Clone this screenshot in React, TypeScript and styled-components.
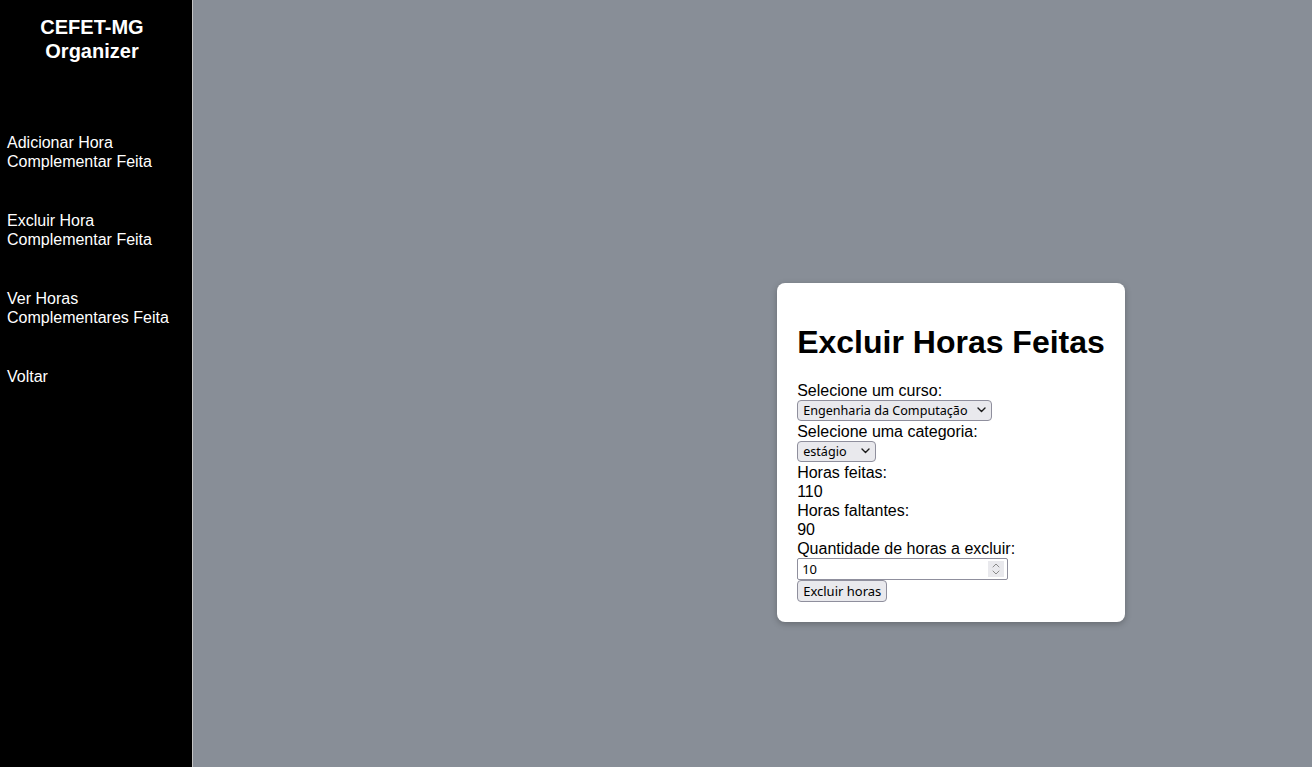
import React, { useState } from 'react';
import styled, { createGlobalStyle } from 'styled-components';

const GlobalStyle = createGlobalStyle`
  html, body {
    margin: 0;
    padding: 0;
    height: 100%;
  }
  body {
    font-family: "Liberation Sans", Arial, sans-serif;
  }
`;

const Layout = styled.div`
  display: flex;
  height: 767px;
  overflow: hidden;
`;

const Sidebar = styled.nav`
  width: 192px;
  flex-shrink: 0;
  background-color: #000;
  color: #fff;
  border-right: 1px solid #c4c4c4;
  display: flex;
  flex-direction: column;
`;

const Brand = styled.h2`
  margin: 15px 8px 0 0;
  font-size: 20px;
  line-height: 24px;
  font-weight: bold;
  text-align: center;
`;

const NavList = styled.ul`
  list-style: none;
  margin: 70px 0 0;
  padding: 0 0 0 7px;
  display: flex;
  flex-direction: column;
  gap: 40px;
`;

const NavLink = styled.a`
  display: block;
  color: #fff;
  text-decoration: none;
  font-size: 16px;
  line-height: 19px;
  cursor: pointer;
`;

const Main = styled.main`
  flex: 1;
  background-color: #888e97;
  display: flex;
  justify-content: center;
  align-items: center;
  padding: 138px 0 0 397px;
`;

const Card = styled.section`
  background: #fff;
  border-radius: 8px;
  padding: 20px;
  box-shadow: 0 2px 6px rgba(0, 0, 0, 0.25);
  display: flex;
  flex-direction: column;
  align-items: flex-start;
`;

const Title = styled.h1`
  margin: 21px 0 20px;
  font-size: 32px;
  line-height: 37px;
  font-weight: bold;
  color: #000;
`;

const Label = styled.label`
  font-size: 16px;
  line-height: 19px;
  color: #000;
`;

const Value = styled.span`
  font-size: 16px;
  line-height: 19px;
  color: #000;
`;

const Field = styled.div`
  display: flex;
  flex-direction: column;
  align-items: flex-start;
`;

const controlFont = `
  font-family: "Noto Sans", "DejaVu Sans", sans-serif;
  font-size: 12.6px;
  color: #000;
`;

const SelectWrap = styled.div<{ $width: number }>`
  position: relative;
  width: ${p => p.$width}px;
  height: 21px;
  margin-bottom: 1px;
`;

const Select = styled.select`
  ${controlFont}
  appearance: none;
  -webkit-appearance: none;
  width: 100%;
  height: 21px;
  margin: 0;
  padding: 0 16px 0 5px;
  box-sizing: border-box;
  background: #e9e9ed;
  border: 1px solid #8f8f9d;
  border-radius: 4px;
  line-height: 19px;
  outline: none;
`;

const Chevron = styled.svg`
  position: absolute;
  right: 6px;
  top: 7px;
  pointer-events: none;
`;

const NumberWrap = styled.div`
  position: relative;
  width: 211px;
  height: 22px;
`;

const NumberInput = styled.input`
  ${controlFont}
  font-size: 13px;
  width: 100%;
  height: 22px;
  margin: 0;
  padding: 0 24px 0 4px;
  box-sizing: border-box;
  background: #fff;
  border: 1px solid #8f8f9d;
  border-radius: 2px;
  outline: none;
  -moz-appearance: textfield;
  &::-webkit-inner-spin-button,
  &::-webkit-outer-spin-button {
    -webkit-appearance: none;
    margin: 0;
  }
`;

const Spinner = styled.div`
  position: absolute;
  right: 4px;
  top: 3px;
  width: 16px;
  height: 16px;
  background: #e9e9ed;
  display: flex;
  align-items: center;
  justify-content: center;
  pointer-events: none;
`;

const Button = styled.button`
  ${controlFont}
  font-size: 13px;
  height: 22px;
  margin: 0;
  padding: 0 5px;
  background: #e9e9ed;
  border: 1px solid #8f8f9d;
  border-radius: 4px;
  line-height: 20px;
  cursor: pointer;
`;

const ChevronDown = () => (
  <Chevron width="9" height="6" viewBox="0 0 9 6">
    <path d="M1 1 L4.5 4.5 L8 1" fill="none" stroke="#1a1a1a" strokeWidth="1.4" strokeLinecap="round" strokeLinejoin="round" />
  </Chevron>
);

export default function App() {
  const [curso, setCurso] = useState('ec');
  const [categoria, setCategoria] = useState('estagio');
  const [qtd, setQtd] = useState('10');

  const links = [
    ['Adicionar Hora', 'Complementar Feita'],
    ['Excluir Hora', 'Complementar Feita'],
    ['Ver Horas', 'Complementares Feita'],
    ['Voltar'],
  ];

  return (
    <>
      <GlobalStyle />
      <Layout>
        <Sidebar>
          <Brand>
            CEFET-MG
            <br />
            Organizer
          </Brand>
          <NavList>
            {links.map(lines => (
              <li key={lines.join(' ')}>
                <NavLink>
                  {lines.map((p, i) => (
                    <React.Fragment key={i}>
                      {i > 0 && <br />}
                      {p}
                    </React.Fragment>
                  ))}
                </NavLink>
              </li>
            ))}
          </NavList>
        </Sidebar>
        <Main>
          <Card>
            <Title>Excluir Horas Feitas</Title>
            <Field>
              <Label htmlFor="curso">Selecione um curso:</Label>
              <SelectWrap $width={195}>
                <Select id="curso" value={curso} onChange={e => setCurso(e.target.value)}>
                  <option value="ec">Engenharia da Computação</option>
                </Select>
                <ChevronDown />
              </SelectWrap>
            </Field>
            <Field>
              <Label htmlFor="categoria">Selecione uma categoria:</Label>
              <SelectWrap $width={79}>
                <Select
                  id="categoria"
                  value={categoria}
                  onChange={e => setCategoria(e.target.value)}
                >
                  <option value="estagio">estágio</option>
                  <option value="pesquisa">pesquisa</option>
                </Select>
                <ChevronDown />
              </SelectWrap>
            </Field>
            <Field>
              <Label>Horas feitas:</Label>
              <Value>110</Value>
            </Field>
            <Field>
              <Label>Horas faltantes:</Label>
              <Value>90</Value>
            </Field>
            <Field>
              <Label htmlFor="qtd">Quantidade de horas a excluir:</Label>
              <NumberWrap>
                <NumberInput
                  id="qtd"
                  type="number"
                  value={qtd}
                  onChange={e => setQtd(e.target.value)}
                />
                <Spinner>
                  <svg width="10" height="14" viewBox="0 0 10 14">
                    <path d="M2 5 L5 2 L8 5" fill="none" stroke="#8a8a8a" strokeWidth="1" strokeLinecap="round" />
                    <path d="M2 9 L5 12 L8 9" fill="none" stroke="#8a8a8a" strokeWidth="1" strokeLinecap="round" />
                  </svg>
                </Spinner>
              </NumberWrap>
            </Field>
            <Button type="button">Excluir horas</Button>
          </Card>
        </Main>
      </Layout>
    </>
  );
}
